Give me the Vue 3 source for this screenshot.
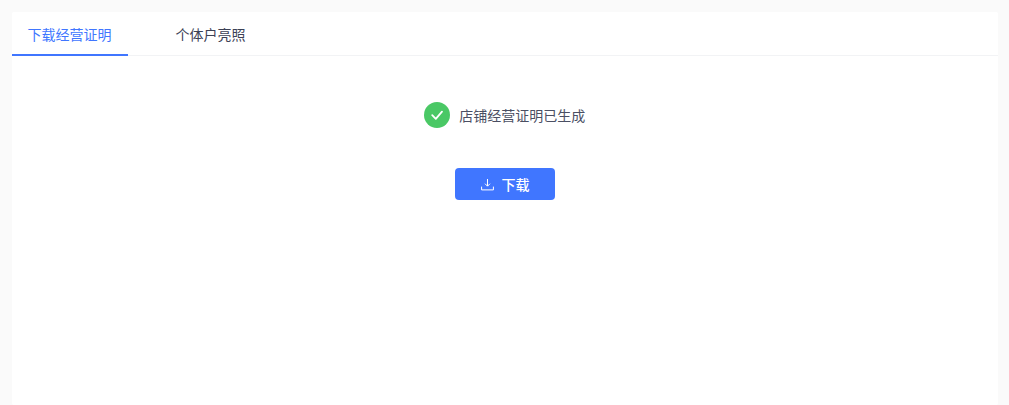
<template>
  <div class="page">
    <div class="card">
      <div class="tabs">
        <div
          v-for="(tab, index) in tabs"
          :key="tab"
          class="tab"
          :class="{ active: index === activeTab }"
        >
          {{ tab }}
        </div>
      </div>

      <div class="content">
        <div class="status">
          <span class="status-icon">
            <svg width="14" height="14" viewBox="0 0 14 14" fill="none">
              <path d="M2.2 7.2L5.8 10.8L12 3.6" stroke="#fff" stroke-width="1.8" stroke-linecap="round" stroke-linejoin="round" />
            </svg>
          </span>
          <span class="status-text">店铺经营证明已生成</span>
        </div>

        <button class="download-btn" type="button">
          <svg width="13" height="13" viewBox="0 0 13 13" fill="none">
            <path d="M6.5 1V8M4 5.7L6.5 8.2L9 5.7M.6 8.6V11.9H12.4V8.6" stroke="#fff" stroke-width="1" />
          </svg>
          <span>下载</span>
        </button>
      </div>
    </div>
  </div>
</template>

<script setup>
import { ref } from 'vue';

const tabs = ['下载经营证明', '个体户亮照'];
const activeTab = ref(0);
</script>

<style>
html, body { margin: 0; background: #fafafa; overflow: hidden; }
</style>

<style scoped>
.page {
  height: 405px;
  box-sizing: border-box;
  padding: 12px 11px 0 12px;
  background: #fafafa;
  font-family: "Noto Sans CJK SC", "Liberation Sans", sans-serif;
}
.card { height: 393px; background: #fff; border-radius: 2px; }
.tabs { display: flex; height: 44px; box-sizing: border-box; border-bottom: 1px solid #f2f3f5; }
.tab {
  width: 116px;
  height: 44px;
  box-sizing: border-box;
  margin-right: 32px;
  padding: 12px 0 0 15.5px;
  font-size: 14px;
  line-height: 20px;
  color: #3c4155;
}
.tab.active { color: #4076ff; border-bottom: 2px solid #4076ff; }
.content { display: flex; flex-direction: column; align-items: center; padding-top: 46px; }
.status { display: flex; align-items: center; gap: 9.5px; height: 26px; margin-right: 1px; }
.status-icon {
  width: 26px;
  height: 26px;
  border-radius: 50%;
  background: #4ac865;
  display: flex;
  align-items: center;
  justify-content: center;
}
.status-text { font-size: 14px; color: #4b4f63; }
.download-btn {
  margin-top: 40px;
  width: 100px;
  height: 32px;
  border: none;
  border-radius: 4px;
  background: #4076ff;
  color: #fff;
  font-family: inherit;
  font-size: 14px;
  font-weight: 500;
  display: flex;
  align-items: center;
  justify-content: center;
  gap: 8px;
  padding: 0;
}
</style>
